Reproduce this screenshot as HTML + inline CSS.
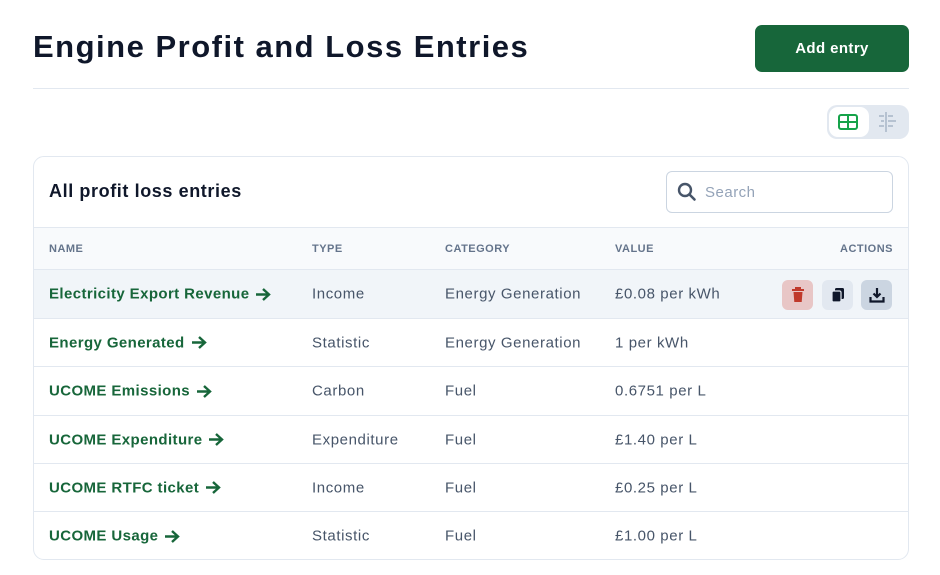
<!DOCTYPE html>
<html><head><style>
*{box-sizing:border-box;margin:0;padding:0}
body{width:940px;height:575px;background:#fff;font-family:"Liberation Sans",sans-serif;position:relative;overflow:hidden;color:#0f172a}
.a{position:absolute}
h1{position:absolute;left:33px;top:29px;font-size:31px;font-weight:bold;color:#0f172a;letter-spacing:1.5px}
.btn{left:755px;top:25px;width:154px;height:47px;background:#17663a;border-radius:7px;color:#fff;font-weight:bold;font-size:15px;display:flex;align-items:center;justify-content:center;letter-spacing:.4px}
.card{left:33px;top:156px;width:876px;height:404px;border:1px solid #e2e8f0;border-radius:11px;overflow:hidden}
.row{position:absolute;left:0;width:876px;border-top:1px solid #e2e8f0;font-size:15px;color:#475569;letter-spacing:.6px}
.row span{position:absolute;top:50%;transform:translateY(-50%);white-space:nowrap}
.n{left:15px;color:#17663a;font-weight:bold;letter-spacing:.4px;display:flex;align-items:center}
.n svg{margin-left:6px}
.t{left:278px}.c{left:411px}.v{left:581px}
.hd span{font-size:11px;font-weight:bold;color:#64748b;letter-spacing:.5px}
.ib{position:absolute;top:10px;width:31px;height:30px;border-radius:6px;display:flex;align-items:center;justify-content:center}
</style></head><body>
<h1>Engine Profit and Loss Entries</h1>
<div class="a btn">Add entry</div>
<div class="a" style="left:33px;top:88px;width:876px;height:1px;background:#e2e8f0"></div>
<div class="a" style="left:827px;top:105px;width:82px;height:34px;background:#e2e8f0;border-radius:10px"></div>
<div class="a" style="left:829px;top:107px;width:40px;height:30px;background:#fff;border-radius:9px"></div>
<svg class="a" style="left:838px;top:114px" width="20" height="16" viewBox="0 0 20 16"><rect x="1" y="1" width="18" height="14" rx="2" fill="none" stroke="#16a34a" stroke-width="2"/><path d="M1 8h18M10 1v14" stroke="#16a34a" stroke-width="2"/></svg>
<svg class="a" style="left:877px;top:112px" width="22" height="20" viewBox="0 0 22 20" stroke="#b6c2d1" stroke-width="2"><path d="M9 0v20M2 4h5M11 4h5M4 9h3M11 9h8M2 14h5M11 14h5"/></svg>
<div class="a card">
<div class="a" style="left:15px;top:24px;font-size:18px;font-weight:bold;color:#0f172a;letter-spacing:.6px">All profit loss entries</div>
<div class="a" style="left:632px;top:14px;width:227px;height:42px;border:1px solid #cbd5e1;border-radius:6px"></div>
<svg class="a" style="left:643px;top:25px" width="20" height="20" viewBox="0 0 20 20"><circle cx="8" cy="8" r="6" fill="none" stroke="#475569" stroke-width="2.4"/><path d="M12.5 12.5l5 5" stroke="#475569" stroke-width="2.6" stroke-linecap="round"/></svg>
<div class="a" style="left:671px;top:27px;font-size:15px;color:#94a3b8;letter-spacing:.5px">Search</div>
<div class="row hd" style="top:70px;height:42px;background:#f8fafc"><span class="a" style="left:15px">NAME</span><span class="t">TYPE</span><span class="c">CATEGORY</span><span class="v">VALUE</span><span style="right:17px">ACTIONS</span></div>
<div class="row" style="top:112px;height:49px;background:#f1f5f9"><span class="n">Electricity Export Revenue<svg width="16" height="14" viewBox="0 0 16 14" fill="none" stroke="#17663a" stroke-width="2.4"><path d="M1 7h13M8 1.5L14 7l-6 5.5"/></svg></span><span class="t">Income</span><span class="c">Energy Generation</span><span class="v">£0.08 per kWh</span>
<div class="ib" style="left:748px;background:#e8c6c6"><svg width="14" height="16" viewBox="0 0 14 16"><path d="M1 3h12M5 3V1h4v2" stroke="#c0392b" stroke-width="2" fill="none"/><path d="M2.5 5h9l-.8 10h-7.4z" fill="#c0392b"/></svg></div>
<div class="ib" style="left:788px;background:#e2e8f0"><svg width="14" height="16" viewBox="0 0 14 16"><rect x="4" y="1" width="9" height="11" rx="1.5" fill="#0f172a"/><rect x="1" y="4" width="9" height="11" rx="1.5" fill="#0f172a" stroke="#e2e8f0" stroke-width="1.2"/></svg></div>
<div class="ib" style="left:827px;background:#cbd5e1"><svg width="16" height="16" viewBox="0 0 16 16" stroke="#0f172a" stroke-width="2.2" fill="none"><path d="M8 1v9M4.5 6.5L8 10l3.5-3.5M1.5 10v4.5h13V10"/></svg></div>
</div>
<div class="row" style="top:161px;height:48px"><span class="n">Energy Generated<svg width="16" height="14" viewBox="0 0 16 14" fill="none" stroke="#17663a" stroke-width="2.4"><path d="M1 7h13M8 1.5L14 7l-6 5.5"/></svg></span><span class="t">Statistic</span><span class="c">Energy Generation</span><span class="v">1 per kWh</span></div>
<div class="row" style="top:209px;height:49px"><span class="n">UCOME Emissions<svg width="16" height="14" viewBox="0 0 16 14" fill="none" stroke="#17663a" stroke-width="2.4"><path d="M1 7h13M8 1.5L14 7l-6 5.5"/></svg></span><span class="t">Carbon</span><span class="c">Fuel</span><span class="v">0.6751 per L</span></div>
<div class="row" style="top:258px;height:48px"><span class="n">UCOME Expenditure<svg width="16" height="14" viewBox="0 0 16 14" fill="none" stroke="#17663a" stroke-width="2.4"><path d="M1 7h13M8 1.5L14 7l-6 5.5"/></svg></span><span class="t">Expenditure</span><span class="c">Fuel</span><span class="v">£1.40 per L</span></div>
<div class="row" style="top:306px;height:48px"><span class="n">UCOME RTFC ticket<svg width="16" height="14" viewBox="0 0 16 14" fill="none" stroke="#17663a" stroke-width="2.4"><path d="M1 7h13M8 1.5L14 7l-6 5.5"/></svg></span><span class="t">Income</span><span class="c">Fuel</span><span class="v">£0.25 per L</span></div>
<div class="row" style="top:354px;height:49px"><span class="n">UCOME Usage<svg width="16" height="14" viewBox="0 0 16 14" fill="none" stroke="#17663a" stroke-width="2.4"><path d="M1 7h13M8 1.5L14 7l-6 5.5"/></svg></span><span class="t">Statistic</span><span class="c">Fuel</span><span class="v">£1.00 per L</span></div>
</div>
</body></html>
